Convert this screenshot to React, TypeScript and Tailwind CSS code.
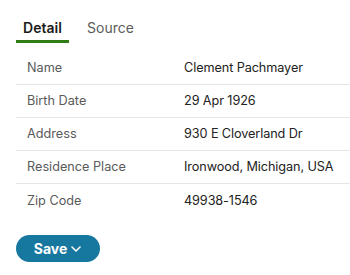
import React from "react";

const rows: [string, string][] = [
  ["Name", "Clement Pachmayer"],
  ["Birth Date", "29 Apr 1926"],
  ["Address", "930 E Cloverland Dr"],
  ["Residence Place", "Ironwood, Michigan, USA"],
  ["Zip Code", "49938-1546"],
];

export default function App() {
  return (
    <div className="w-[350px] h-[275px] bg-white pl-4 pt-[12px]" style={{ fontFamily: "Inter, 'Noto Sans', sans-serif" }}>
      <div className="flex items-end h-[31px]">
        <div className="w-[53px] h-full flex flex-col items-center justify-center border-b-[3px] border-[#2f7d14] pt-[3px]">
          <span className="text-[14px] font-semibold text-[#1b1b1b]">Detail</span>
        </div>
        <div className="h-full flex items-center pl-[18px]">
          <span className="text-[14px] text-[#5c5c5c]">Source</span>
        </div>
      </div>
      <div className="mt-[9px]">
        {rows.map(([k, v], i) => (
          <div
            key={k}
            className={`flex items-center h-[33px] text-[12.7px] ${i < rows.length - 1 ? "border-b border-[#e6e6e6]" : ""}`}
          >
            <div className="w-[168px] pl-[11px] text-[#5a5a5a]">{k}</div>
            <div className="text-[#222] tracking-[-0.1px]">{v}</div>
          </div>
        ))}
      </div>
      <button className="mt-[18px] w-[84px] h-[27px] rounded-full bg-[#17789f] text-white text-[14px] font-bold flex items-center justify-center gap-[3px]">
        Save
        <svg width="12" height="12" viewBox="0 0 12 12" fill="none" stroke="white" strokeWidth="1.6" strokeLinecap="round" strokeLinejoin="round">
          <path d="M2 4l4 4 4-4" />
        </svg>
      </button>
    </div>
  );
}
